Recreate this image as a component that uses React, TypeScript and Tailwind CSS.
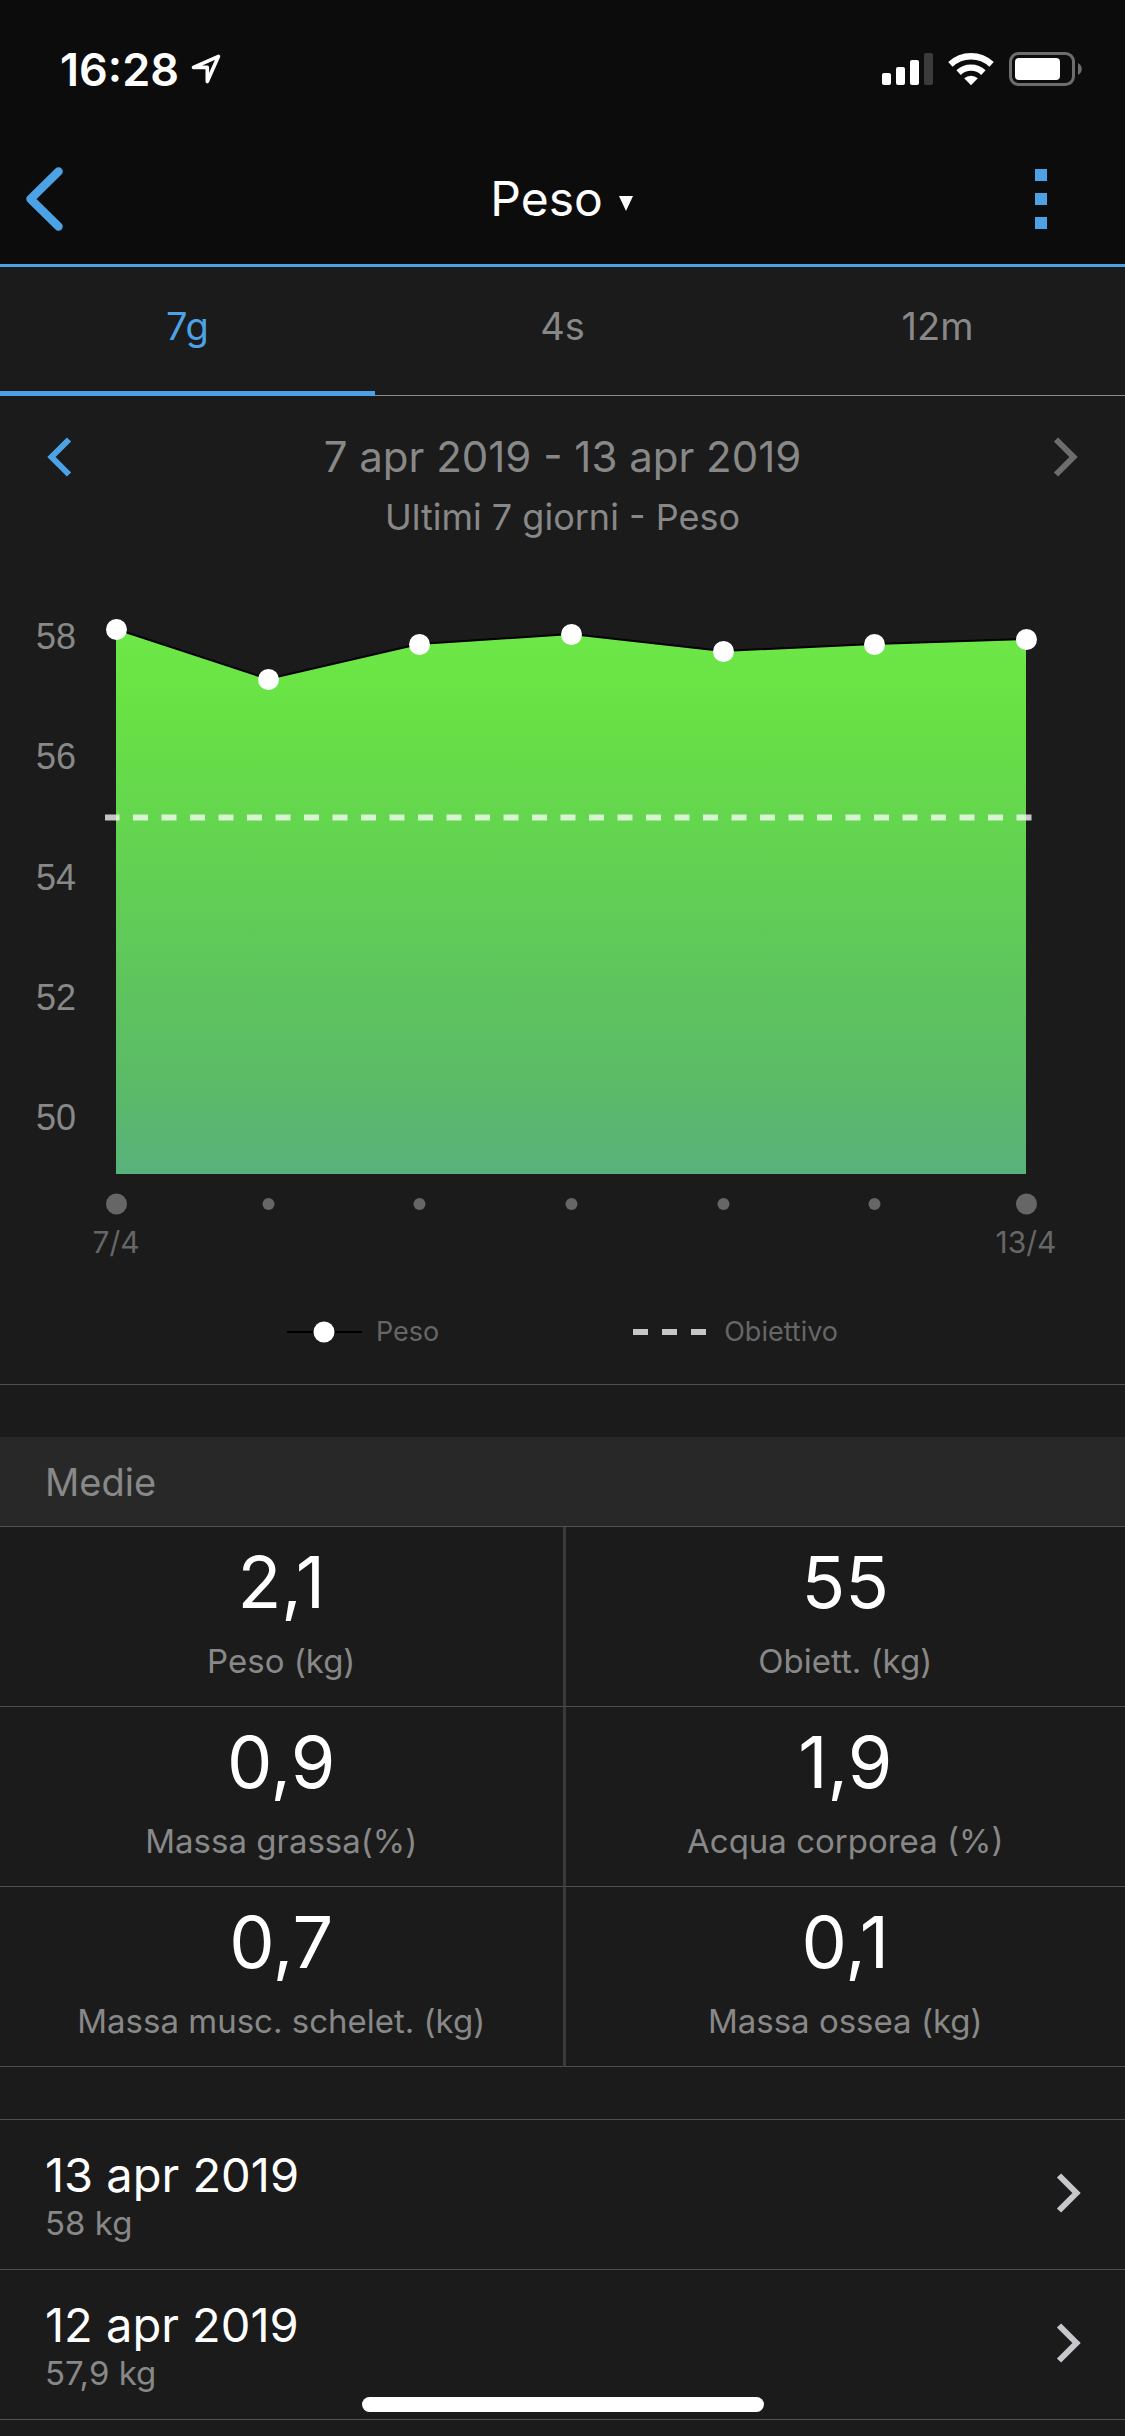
import { useState } from "react";

const periods = [
  { id: "week", label: "7g" },
  { id: "month", label: "4s" },
  { id: "year", label: "12m" },
];

const points = [
  { x: 116, y: 629 },
  { x: 268, y: 679 },
  { x: 419, y: 644 },
  { x: 571, y: 634 },
  { x: 723, y: 651 },
  { x: 874, y: 644 },
  { x: 1026, y: 639 },
];

const axisLabels = [
  { value: "58", y: 649 },
  { value: "56", y: 769 },
  { value: "54", y: 890 },
  { value: "52", y: 1010 },
  { value: "50", y: 1130 },
];

const averages = [
  { value: "2,1", label: "Peso (kg)" },
  { value: "55", label: "Obiett. (kg)" },
  { value: "0,9", label: "Massa grassa(%)" },
  { value: "1,9", label: "Acqua corporea (%)" },
  { value: "0,7", label: "Massa musc. schelet. (kg)" },
  { value: "0,1", label: "Massa ossea (kg)" },
];

const entries = [
  { date: "13 apr 2019", weight: "58 kg" },
  { date: "12 apr 2019", weight: "57,9 kg" },
];

function StatusBar() {
  return (
    <div className="flex h-[134px] items-center justify-between pt-1 pr-[42px] pl-[60px]">
      <div className="flex items-center gap-3">
        <span className="text-[45px] leading-none font-semibold">16:28</span>
        <svg width="30" height="30" viewBox="0 0 30 30" fill="none" aria-hidden="true">
          <path
            d="M27.500 2.300 2.500 13.400h13.800v14.200Z"
            stroke="white"
            strokeWidth="3.6"
            strokeLinejoin="round"
          />
        </svg>
      </div>
      <div className="flex items-center gap-[15px]">
        <svg width="51" height="34" viewBox="0 0 51 34" fill="white" aria-hidden="true">
          <rect x="0" y="21" width="9" height="12" rx="2" />
          <rect x="14" y="15" width="9" height="18" rx="2" />
          <rect x="28" y="8" width="9" height="25" rx="2" />
          <rect x="42" y="1" width="9" height="32" rx="2" fill="#3b3b3b" />
        </svg>
        <svg width="46" height="34" viewBox="0 0 46 34" aria-hidden="true">
          <path d="M23 33.300 16.200 26.200a10.500 10.500 0 0 1 13.600 0Z" fill="white" />
          <path d="M10.600 20.600a18 18 0 0 1 24.800 0" fill="none" stroke="white" strokeWidth="6.4" />
          <path d="M2.400 12.400a30 30 0 0 1 41.200 0" fill="none" stroke="white" strokeWidth="6.4" />
        </svg>
        <svg width="74" height="34" viewBox="0 0 74 34" aria-hidden="true">
          <rect
            x="1.5"
            y="1.5"
            width="63"
            height="31"
            rx="8"
            fill="none"
            stroke="#6d6d6d"
            strokeWidth="3"
          />
          <rect x="6" y="6" width="45" height="22" rx="4" fill="white" />
          <path d="M69 11c5 2.500 5 9.500 0 12Z" fill="#6d6d6d" />
        </svg>
      </div>
    </div>
  );
}

function Chevron({ flip = false }: { flip?: boolean }) {
  return (
    <svg
      width="26"
      height="40"
      viewBox="0 0 26 40"
      fill="none"
      stroke="currentColor"
      strokeWidth="6"
      className={flip ? "rotate-180" : ""}
      aria-hidden="true"
    >
      <path d="M3 2.500 20.500 20 3 37.500" />
    </svg>
  );
}

function WeightChart() {
  const line = points.map((p) => `${p.x},${p.y}`).join(" ");

  return (
    <svg viewBox="0 540 1125 740" className="block w-full" role="img" aria-label="Peso">
      <defs>
        <linearGradient id="area" gradientUnits="userSpaceOnUse" x1="0" y1="629" x2="0" y2="1174">
          <stop offset="0" stopColor="#6ee848" />
          <stop offset="0.15" stopColor="#68e144" />
          <stop offset="0.83" stopColor="#5bbb67" />
          <stop offset="1" stopColor="#59b17b" />
        </linearGradient>
      </defs>
      {axisLabels.map((tick) => (
        <text
          key={tick.value}
          x="76"
          y={tick.y}
          textAnchor="end"
          fill="#888888"
          className="font-['Liberation_Sans',sans-serif] text-[36px]"
        >
          {tick.value}
        </text>
      ))}
      <polygon points={`116,1174 ${line} 1026,1174`} fill="url(#area)" />
      <polyline points={line} fill="none" stroke="black" strokeWidth="2" />
      <line
        x1="105"
        y1="817.5"
        x2="1032"
        y2="817.5"
        stroke="white"
        strokeOpacity="0.75"
        strokeWidth="6"
        strokeDasharray="15 13.5"
        strokeDashoffset="0.5"
      />
      {points.map((p) => (
        <circle key={p.x} cx={p.x + 0.5} cy={p.y + 0.5} r="10.5" fill="white" />
      ))}
      {points.map((p, i) => (
        <circle
          key={p.x}
          cx={p.x + 0.5}
          cy="1204"
          r={i === 0 || i === points.length - 1 ? 10.5 : 6}
          fill="#666666"
        />
      ))}
      <g textAnchor="middle" fill="#666666" className="text-[30px]">
        <text x="116" y="1253">
          7/4
        </text>
        <text x="1026" y="1253">
          13/4
        </text>
      </g>
    </svg>
  );
}

function Legend() {
  return (
    <div className="flex h-[104px] items-center justify-center gap-[194px] text-[27px] text-[#666666]">
      <div className="flex items-center gap-3.5">
        <svg width="75" height="22" viewBox="0 0 75 22" aria-hidden="true">
          <path d="M0 11h75" stroke="black" strokeWidth="2" />
          <circle cx="37" cy="11" r="10.5" fill="white" />
        </svg>
        Peso
      </div>
      <div className="flex items-center gap-[18px]">
        <svg width="73" height="22" viewBox="0 0 73 22" aria-hidden="true">
          <path d="M0 11h73" stroke="#c6c6c6" strokeWidth="6" strokeDasharray="15 14" />
        </svg>
        Obiettivo
      </div>
    </div>
  );
}

export default function App() {
  const [period, setPeriod] = useState("week");

  return (
    <div className="relative min-h-screen bg-[#1b1b1b] font-['Inter',sans-serif] text-white">
      <header className="border-b-3 border-[#4ba3e6] bg-[#0c0c0c]">
        <StatusBar />
        <nav className="flex h-[130px] items-center justify-between pr-[78px] pl-6">
          <button type="button" aria-label="Indietro" className="-mr-3 w-36 text-[#4ba3e6]">
            <svg width="42" height="64" viewBox="0 0 42 64" fill="none" aria-hidden="true">
              <path
                d="M34.500 4.500 6.500 32 34.500 59.500"
                stroke="currentColor"
                strokeWidth="8.5"
                strokeLinecap="round"
                strokeLinejoin="round"
              />
            </svg>
          </button>
          <button type="button" className="flex items-center gap-4 text-[48px] leading-none">
            Peso
            <svg width="14" height="15" viewBox="0 0 14 15" fill="white" className="mt-2" aria-hidden="true">
              <path d="M0 0h14L7 15Z" />
            </svg>
          </button>
          <button type="button" aria-label="Altro" className="flex w-20 justify-end text-[#4ba3e6]">
            <svg width="12" height="60" viewBox="0 0 12 60" fill="currentColor" aria-hidden="true">
              <path d="M0 0h12v12H0ZM0 24h12v12H0ZM0 48h12v12H0Z" />
            </svg>
          </button>
        </nav>
      </header>

      <div role="tablist" className="grid grid-cols-3 text-[38px] leading-[48px]">
        {periods.map((p) => (
          <button
            key={p.id}
            type="button"
            role="tab"
            aria-selected={period === p.id}
            onClick={() => setPeriod(p.id)}
            className={
              period === p.id
                ? "flex h-[129px] items-start justify-center border-b-5 border-[#4ba3e6] pt-[35px] text-[#4ba3e6]"
                : "flex h-[129px] items-start justify-center border-b border-[#8a8a8a] pt-[35px] text-[#888888]"
            }
          >
            {p.label}
          </button>
        ))}
      </div>

      <section className="border-b border-[#505050] text-[#888888]">
        <div className="flex h-[86px] items-center justify-between px-[46px] pt-9">
          <button type="button" aria-label="Periodo precedente" className="text-[#4ba3e6]">
            <Chevron flip />
          </button>
          <h1 className="text-[42px] leading-[50px]">7 apr 2019 - 13 apr 2019</h1>
          <button type="button" aria-label="Periodo successivo" className="text-[#6d6d6d]">
            <Chevron />
          </button>
        </div>
        <p className="mt-3 text-center text-[36px] leading-[46px]">Ultimi 7 giorni - Peso</p>
        <WeightChart />
        <Legend />
      </section>

      <section className="mt-[52px]">
        <h2 className="h-[90px] border-b border-[#505050] bg-[#282828] px-[45px] text-[38px] leading-[90px] text-[#888888]">
          Medie
        </h2>
        <dl className="grid grid-cols-2">
          {averages.map((item) => (
            <div
              key={item.label}
              className="flex h-[180px] flex-col-reverse items-center justify-end border-b border-[#505050] pt-2.5 even:border-l-3 even:border-l-[#3a3a3a]"
            >
              <dt className="mt-2.5 text-[33px] leading-[48px] text-[#888888]">{item.label}</dt>
              <dd className="text-[72px] leading-[90px]">{item.value}</dd>
            </div>
          ))}
        </dl>
      </section>

      <ul className="mt-[52px] border-t border-[#505050]">
        {entries.map((entry) => (
          <li key={entry.date} className="border-b border-[#505050]">
            <button
              type="button"
              className="flex h-[149px] w-full items-center justify-between pr-[43px] pb-1 pl-[45px] text-left"
            >
              <span className="flex flex-col">
                <span className="text-[47px] leading-[60px]">{entry.date}</span>
                <span className="text-[33px] leading-[36px] text-[#888888]">{entry.weight}</span>
              </span>
              <span className="text-[#c7c7cc]">
                <Chevron />
              </span>
            </button>
          </li>
        ))}
      </ul>

      <div className="fixed bottom-6 left-1/2 h-[15px] w-[402px] -translate-x-1/2 rounded-full bg-white" />
    </div>
  );
}
